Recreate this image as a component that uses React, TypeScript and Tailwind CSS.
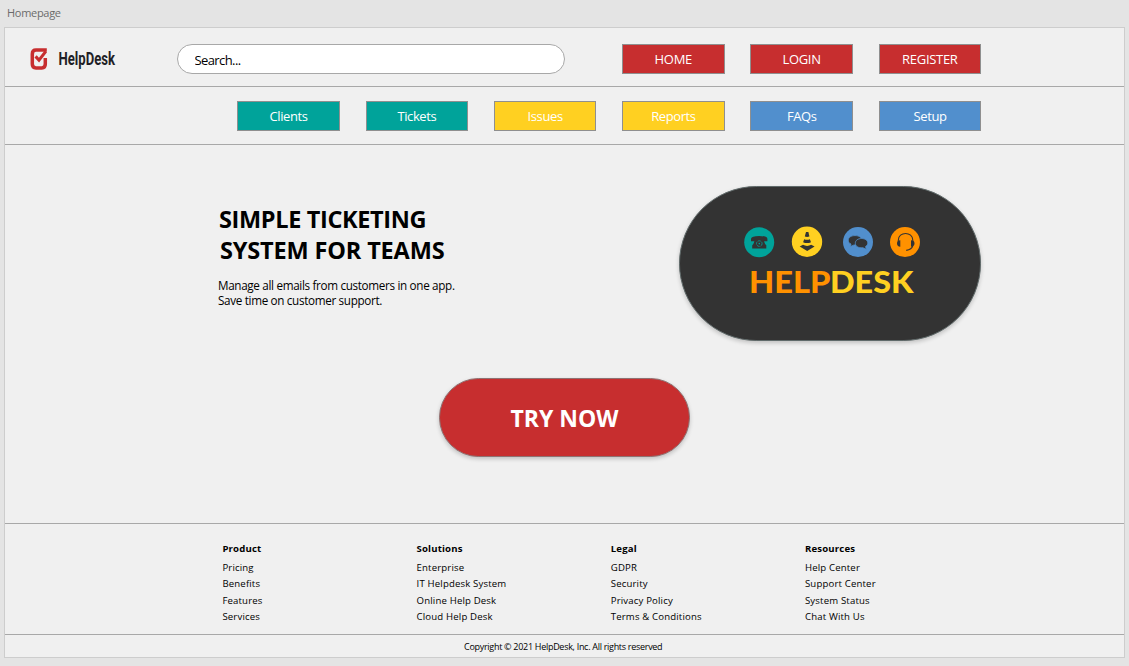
import type { ReactNode } from 'react';

const accountLinks = ['HOME', 'LOGIN', 'REGISTER'];

const navLinks = [
  { label: 'Clients', color: 'bg-[#00a39a]' },
  { label: 'Tickets', color: 'bg-[#00a39a]' },
  { label: 'Issues', color: 'bg-[#ffd021]' },
  { label: 'Reports', color: 'bg-[#ffd021]' },
  { label: 'FAQs', color: 'bg-[#518fcd]' },
  { label: 'Setup', color: 'bg-[#518fcd]' },
];

const footerColumns = [
  { title: 'Product', links: ['Pricing', 'Benefits', 'Features', 'Services'] },
  { title: 'Solutions', links: ['Enterprise', 'IT Helpdesk System', 'Online Help Desk', 'Cloud Help Desk'] },
  { title: 'Legal', links: ['GDPR', 'Security', 'Privacy Policy', 'Terms & Conditions'] },
  { title: 'Resources', links: ['Help Center', 'Support Center', 'System Status', 'Chat With Us'] },
];

function BarButton({ color, className, children }: { color: string; className: string; children: ReactNode }) {
  return (
    <button
      className={`flex h-[29.5px] items-center justify-center border border-[#8f8f8f] pt-px text-[13px] leading-none text-white ${color} ${className}`}
    >
      {children}
    </button>
  );
}

function Logo() {
  return (
    <svg width="92" height="26" viewBox="0 0 92 26" className="shrink-0 overflow-visible" role="img" aria-label="HelpDesk">
      <path
        d="M16.8 4.1H6Q2.3 4.1 2.3 8V18Q2.3 21.9 6 21.9H11.8Q15.3 21.9 15.3 18V12"
        fill="none"
        stroke="#c72e2f"
        strokeWidth="3.5"
      />
      <path d="M5.6 10.4L9 14.2L15.8 5.4" fill="none" stroke="#c72e2f" strokeWidth="3.1" />
      <text
        x="28.5"
        y="19.2"
        fontFamily="Roboto, sans-serif"
        fontWeight="700"
        fontSize="18.5"
        fill="#1f1f26"
        textLength="56.5"
        lengthAdjust="spacingAndGlyphs"
      >
        HelpDesk
      </text>
    </svg>
  );
}

function HelpdeskArt() {
  return (
    <svg width="299" height="153" viewBox="680 187 299 153" role="img" aria-label="HELPDESK">
      <circle cx="759.2" cy="242.2" r="15" fill="#00a39a" />
      <g fill="#333">
        <path d="M751 241.3V238.7Q751.5 236 759.2 236T767.4 238.7V241.3H763.2V239.4H755.2V241.3Z" />
        <path d="M754.6 239H763.8Q764.1 243.5 766.3 245.2V248.6H752.2V245.2Q754.4 243.5 754.6 239Z" />
      </g>
      <circle cx="759.3" cy="243.6" r="2.8" fill="none" stroke="#00a39a" strokeWidth=".8" strokeDasharray="3 .8" />
      <circle cx="759.3" cy="243.6" r=".8" fill="#00a39a" />

      <circle cx="807" cy="241.7" r="15.2" fill="#ffd021" />
      <g fill="#333">
        <path d="M806 232H808.4L809.4 236.5Q807 237.4 804.8 236.5Z" />
        <path d="M804.2 239.2Q807 240.2 809.9 239.2L811 242.2Q807 244 803.1 242.2Z" />
        <path d="M799.7 246.6L803 244.8Q807 247 811.2 244.8L814.6 246.6L807.2 251Z" />
      </g>

      <circle cx="858" cy="242.1" r="15" fill="#518fcd" />
      <g fill="#333" stroke="#518fcd" strokeWidth=".8">
        <path d="M855 235.6C851 235.6 848.3 237.5 848.3 240.2C848.3 242 849.3 243.3 851 244.1L850.2 246.5L854.2 244.9C859 245.1 861.8 243 861.8 240.2C861.8 237.4 859 235.6 855 235.6Z" />
        <path d="M861.5 238.5C857.8 238.5 855.3 240.5 855.3 243.2C855.3 246.2 858.4 248.2 862.8 247.7L866.4 249.3L865.5 246.6C867 245.7 867.8 244.5 867.8 243.1C867.8 240.4 865.2 238.5 861.5 238.5Z" />
      </g>

      <circle cx="905" cy="242.1" r="15" fill="#ff9100" />
      <g fill="none" stroke="#333" strokeWidth="1.1">
        <path d="M898.3 241.2V240.2C898.3 231.3 912.8 231.3 912.8 240.2V241.2" />
        <path d="M912.9 245.5Q911.8 249.5 906.2 250.4" />
      </g>
      <path d="M900.3 240.3V246.8Q897 246.6 897 243.5T900.3 240.3ZM911 240.3V246.8Q914.5 246.6 914.5 243.5T911 240.3Z" fill="#333" />

      <g fontFamily="Lato, sans-serif" fontWeight="900" fontSize="29.4">
        <text x="749" y="292.6" fill="#ff9100" textLength="81.5" lengthAdjust="spacingAndGlyphs">
          HELP
        </text>
        <text x="830" y="292.6" fill="#ffd021" textLength="83.5" lengthAdjust="spacingAndGlyphs">
          DESK
        </text>
      </g>
    </svg>
  );
}

export default function App() {
  return (
    <div className="h-[666px] w-[1129px] overflow-hidden bg-[#e4e4e4] pl-1 font-['Open_Sans',sans-serif] text-black">
      <div className="flex h-[27px] items-center pl-[3px] text-[11px] tracking-[-0.3px] text-[#6b6b6b]">Homepage</div>
      <div className="flex h-[631px] w-[1121px] flex-col border border-[#cdcdcd] bg-[#f0f0f0]">
        <header className="flex h-[59px] shrink-0 items-start border-b border-[#a8a8a8] pl-[25px]">
          <div className="mt-[18px]">
            <Logo />
          </div>
          <div className="mt-4 ml-[55px] h-[29.5px] w-[388px] rounded-full border border-[#a8a8a8] bg-white">
            <input
              type="text"
              placeholder="Search..."
              className="block h-full w-full bg-transparent pt-[3px] pr-4 pl-[16.5px] text-[13px] tracking-[-0.6px] outline-none placeholder:text-black"
            />
          </div>
          <div className="mt-4 ml-[57px] grid grid-cols-[repeat(3,102.5px)] gap-x-[25.8px]">
            {accountLinks.map((label) => (
              <BarButton key={label} color="bg-[#c72e2f]" className="tracking-[-0.3px]">
                {label}
              </BarButton>
            ))}
          </div>
        </header>

        <nav className="grid h-[58px] shrink-0 grid-cols-[repeat(6,102.5px)] content-start gap-x-[25.8px] border-b border-[#a8a8a8] pt-[14px] pl-[232.3px]">
          {navLinks.map((link) => (
            <BarButton key={link.label} color={link.color} className="tracking-[-0.4px]">
              {link.label}
            </BarButton>
          ))}
        </nav>

        <main className="flex h-[379px] shrink-0 flex-col border-b border-[#a8a8a8]">
          <section className="flex h-[232.5px] items-start">
            <div className="w-[674px] pt-[59px] pl-[213px]">
              <h1 className="text-[23.5px] leading-[31px] font-bold">
                <span className="block pl-px tracking-[-0.35px]">SIMPLE TICKETING</span>
                <span className="block pl-[2px] tracking-[-0.15px]">SYSTEM FOR TEAMS</span>
              </h1>
              <p className="mt-[12px] text-[11.7px] leading-[15px] tracking-[-0.33px]">
                Manage all emails from customers in one app.
                <br />
                Save time on customer support.
              </p>
            </div>
            <div className="mt-[40.5px] h-[155px] w-[302px] rounded-full border border-[#606a6a] bg-[#333] shadow-[0_2px_4px_rgba(0,0,0,0.2)]">
              <HelpdeskArt />
            </div>
          </section>
          <button className="ml-[434px] flex h-[79px] w-[251px] items-center justify-center rounded-full border border-[#8f7272] bg-[#c72e2f] pt-[3px] text-[23px] font-bold text-white shadow-[0_2px_4px_rgba(0,0,0,0.2)]">
            TRY NOW
          </button>
        </main>

        <footer className="flex flex-1 flex-col">
          <div className="grid h-[111px] shrink-0 grid-cols-[repeat(4,194.2px)] border-b border-[#a8a8a8] pt-[17px] pl-[217.4px]">
            {footerColumns.map((column) => (
              <div key={column.title} className="text-[9.6px] tracking-[0.16px]">
                <h2 className="mb-[3px] leading-4 font-bold">{column.title}</h2>
                <ul>
                  {column.links.map((link) => (
                    <li key={link} className="leading-[16.3px]">
                      {link}
                    </li>
                  ))}
                </ul>
              </div>
            ))}
          </div>
          <p className="pt-[4px] pl-[459px] text-[9px] leading-4 tracking-[-0.29px]">
            Copyright © 2021 HelpDesk, Inc. All rights reserved
          </p>
        </footer>
      </div>
    </div>
  );
}
